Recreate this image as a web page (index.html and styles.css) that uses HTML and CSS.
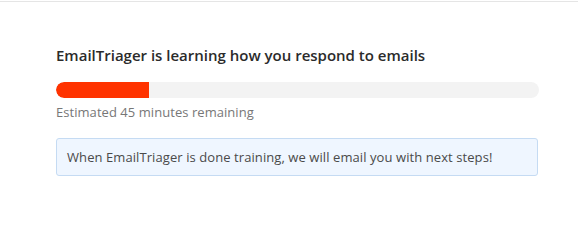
FILE: index.html
```html
<!DOCTYPE html>
<html>
<head>
<meta charset="utf-8">
<link rel="stylesheet" href="styles.css">
</head>
<body>
<div class="topbar"></div>
<main class="panel">
  <h2 class="title">EmailTriager is learning how you respond to emails</h2>
  <div class="track"><div class="fill" style="width: 19.3%"></div></div>
  <p class="eta">Estimated 45 minutes remaining</p>
  <div class="notice">When EmailTriager is done training, we will email you with next steps!</div>
</main>
</body>
</html>
```
FILE: styles.css
```css
html, body {
  margin: 0;
  padding: 0;
  background: #ffffff;
}
body {
  font-family: "Open Sans", "Noto Sans", sans-serif;
  width: 578px;
  height: 221px;
  overflow: hidden;
}
.topbar {
  height: 1px;
  border-bottom: 1px solid #e5e5e5;
}
.panel {
  width: 483px;
  margin: 0 0 0 56px;
  padding-top: 42px;
}
.title {
  margin: 0;
  font-size: 15px;
  font-weight: 600;
  line-height: 22px;
  color: #2b2b2b;
  letter-spacing: 0;
}
.track {
  margin-top: 16px;
  height: 16px;
  border-radius: 8px;
  background: #f3f3f3;
  overflow: hidden;
}
.fill {
  height: 100%;
  background: #ff3300;
  border-radius: 8px 0 0 8px;
}
.eta {
  margin: 5px 0 0 0;
  font-size: 13px;
  line-height: 18px;
  color: #777777;
  letter-spacing: 0.05px;
}
.notice {
  margin-top: 17px;
  width: 482px;
  box-sizing: border-box;
  padding: 9px 10px;
  background: #eff6ff;
  border: 1px solid #c5dbf3;
  border-radius: 3px;
  font-size: 13px;
  line-height: 18px;
  color: #4a4a4a;
  letter-spacing: 0.08px;
}
```
